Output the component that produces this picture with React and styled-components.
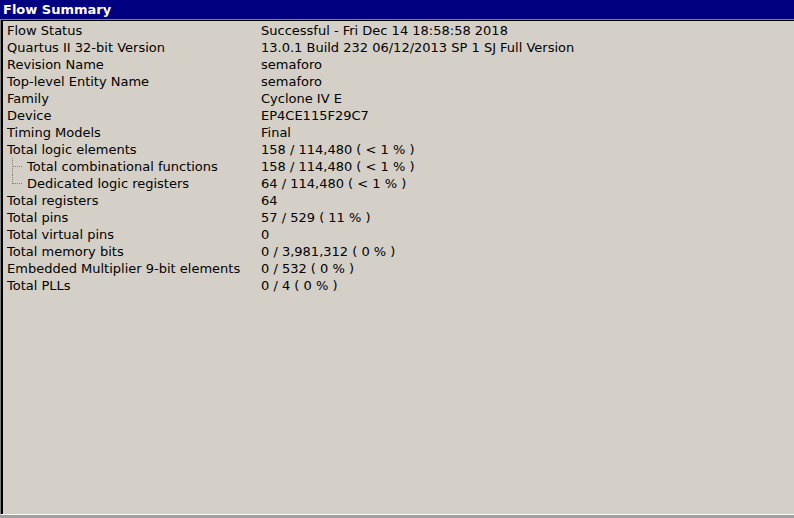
import React from "react";
import styled, { createGlobalStyle } from "styled-components";

const rows = [
  { label: "Flow Status", value: "Successful - Fri Dec 14 18:58:58 2018" },
  { label: "Quartus II 32-bit Version", value: "13.0.1 Build 232 06/12/2013 SP 1 SJ Full Version" },
  { label: "Revision Name", value: "semaforo" },
  { label: "Top-level Entity Name", value: "semaforo" },
  { label: "Family", value: "Cyclone IV E" },
  { label: "Device", value: "EP4CE115F29C7" },
  { label: "Timing Models", value: "Final" },
  { label: "Total logic elements", value: "158 / 114,480 ( < 1 % )" },
  { label: "Total combinational functions", value: "158 / 114,480 ( < 1 % )", child: "mid" },
  { label: "Dedicated logic registers", value: "64 / 114,480 ( < 1 % )", child: "last" },
  { label: "Total registers", value: "64" },
  { label: "Total pins", value: "57 / 529 ( 11 % )" },
  { label: "Total virtual pins", value: "0" },
  { label: "Total memory bits", value: "0 / 3,981,312 ( 0 % )" },
  { label: "Embedded Multiplier 9-bit elements", value: "0 / 532 ( 0 % )" },
  { label: "Total PLLs", value: "0 / 4 ( 0 % )" },
];

const Global = createGlobalStyle`
  html, body {
    margin: 0;
    padding: 0;
    background: #a0a0a0;
  }
  body {
    font-family: "DejaVu Sans", "Liberation Sans", sans-serif;
  }
`;

const Branch = ({ kind }) => (
  <BranchSvg width="20" height="17" viewBox="0 0 20 17">
    <line
      x1="5.5"
      y1="0"
      x2="5.5"
      y2={kind === "last" ? 9 : 17}
      stroke="#808080"
      strokeDasharray="1 1"
    />
    <line x1="6" y1="8.5" x2="16" y2="8.5" stroke="#808080" strokeDasharray="1 1" />
  </BranchSvg>
);

const App = () => {
  return (
    <>
      <Global />
      <Window>
        <TitleBar>Flow Summary</TitleBar>
        <Panel>
          <Inner>
            <Table>
              {rows.map((r) => (
                <Row key={r.label}>
                  <Label>
                    {r.child && <Branch kind={r.child} />}
                    {r.label}
                  </Label>
                  <Value>{r.value}</Value>
                </Row>
              ))}
            </Table>
          </Inner>
        </Panel>
      </Window>
    </>
  );
};

export default App;

const Window = styled.div`
  width: 794px;
  height: 518px;
  display: flex;
  flex-direction: column;
  background: #a0a0a0;
`;

const TitleBar = styled.div`
  height: 19px;
  background: #000080;
  color: #ffffff;
  font-weight: bold;
  font-size: 13px;
  line-height: 19px;
  padding-left: 3px;
  flex: none;
`;

const Panel = styled.div`
  flex: 1;
  border-top: 1px solid #808080;
  border-left: 1px solid #808080;
  border-bottom: 1px solid #ffffff;
  margin-bottom: 3px;
  display: flex;
`;

const Inner = styled.div`
  flex: 1;
  border-top: 1px solid #000000;
  border-left: 2px solid #000000;
  background: #d4d0c8;
  padding-top: 1px;
`;

const Table = styled.div`
  display: flex;
  flex-direction: column;
`;

const Row = styled.div`
  display: grid;
  grid-template-columns: 254px 1fr;
  height: 17px;
  align-items: center;
  font-size: 13px;
  color: #000000;
  padding-left: 4px;
`;

const Label = styled.div`
  display: flex;
  align-items: center;
  white-space: nowrap;
`;

const Value = styled.div`
  white-space: nowrap;
`;

const BranchSvg = styled.svg`
  display: block;
  flex: none;
`;
